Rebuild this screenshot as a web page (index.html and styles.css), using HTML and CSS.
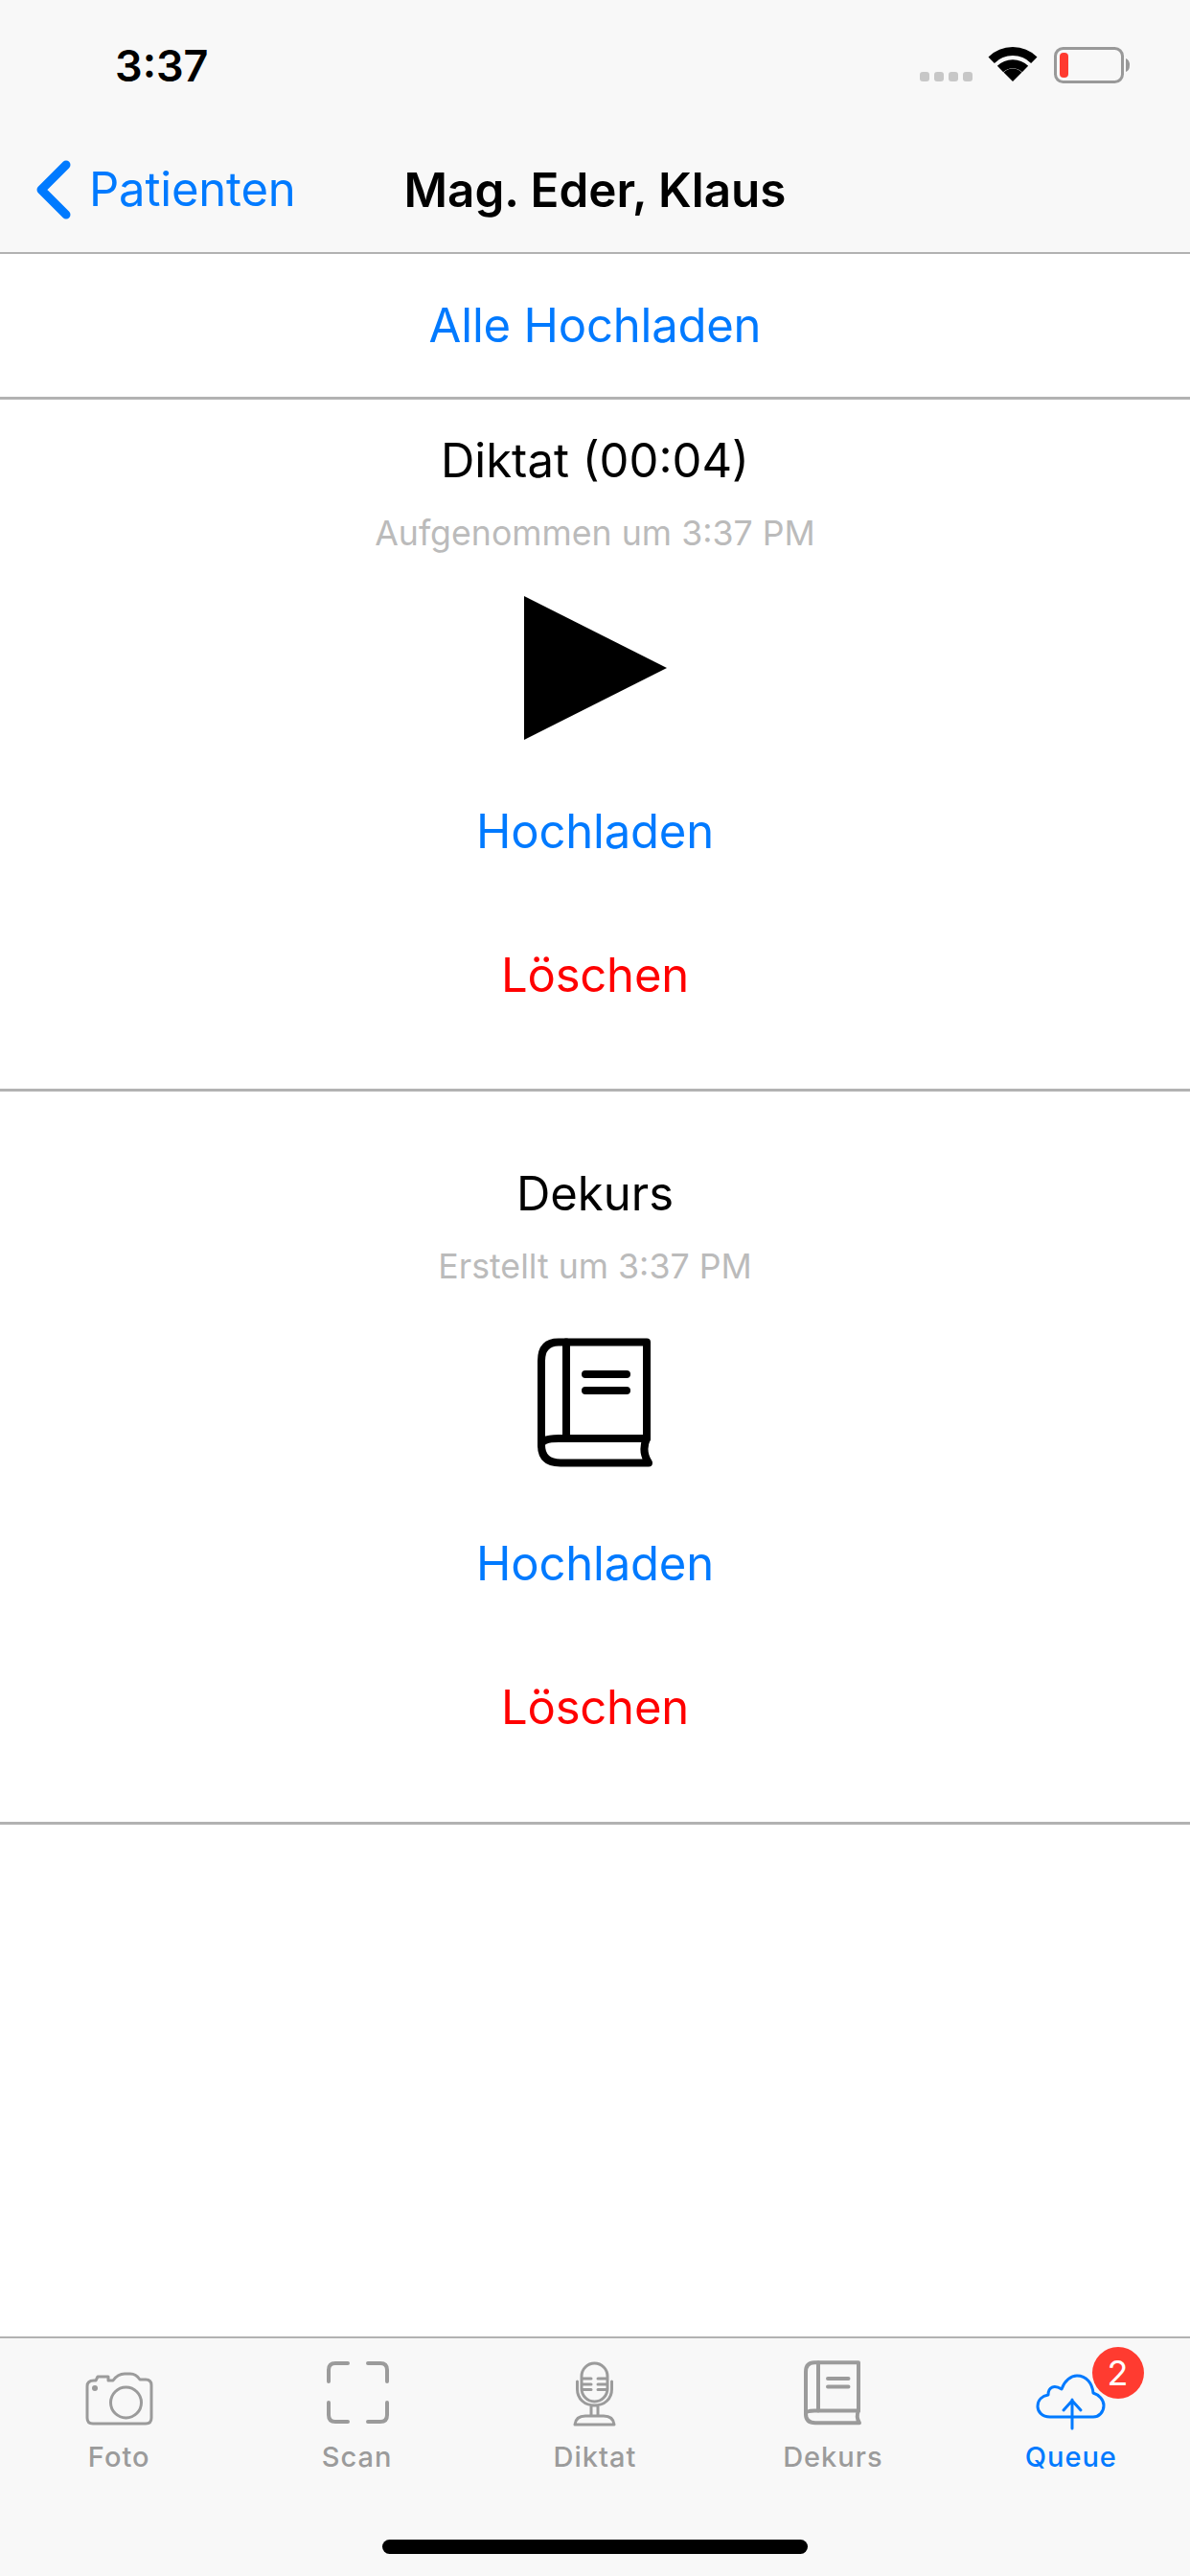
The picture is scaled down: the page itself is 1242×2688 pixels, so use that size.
FILE: index.html
```html
<!DOCTYPE html>
<html lang="de">
<head>
<meta charset="utf-8">
<title>Queue</title>
<link rel="stylesheet" href="styles.css">
</head>
<body>
<div class="app">
  <header class="top">
    <div class="status">
      <span class="time">3:37</span>
      <svg class="status-icons" width="230" height="55" viewBox="0 0 230 55">
        <g fill="#c7c7c7"><rect x="8" y="35" width="10" height="10" rx="3"/><rect x="23" y="35" width="10" height="10" rx="3"/><rect x="38" y="35" width="10" height="10" rx="3"/><rect x="53" y="35" width="10" height="10" rx="3"/></g>
        <g fill="none" stroke="#000" stroke-width="9"><path d="M82.7 22.7a31.5 31.5 0 0 1 44.6 0"/><path d="M92 32a18.5 18.5 0 0 1 26 0"/></g>
        <path d="M105 45l-9.5-9.5a13.5 13.5 0 0 1 19 0z"/>
        <rect x="149.500" y="10.500" width="70" height="35" rx="8" fill="none" stroke="#999" stroke-width="3"/>
        <rect x="154" y="15" width="9" height="26" rx="4" fill="#ff3b30"/>
        <path d="M223 21q4 1.500 4 7t-4 7z" fill="#999"/>
      </svg>
    </div>
    <nav class="navbar">
      <a class="back">
        <svg class="chevron" width="38" height="64" viewBox="0 0 38 64"><path d="M32 6L6 32l26 26" fill="none" stroke="#007aff" stroke-width="9" stroke-linecap="round" stroke-linejoin="round"/></svg>
        <span>Patienten</span>
      </a>
      <h1 class="title">Mag. Eder, Klaus</h1>
      <span></span>
    </nav>
  </header>

  <main class="content">
    <div class="upload-all"><a class="link">Alle Hochladen</a></div>

    <section class="item item-first">
      <div class="item-title">Diktat (00:04)</div>
      <div class="item-sub">Aufgenommen um 3:37 PM</div>
      <svg class="item-icon" width="149" height="150" viewBox="0 0 149 150"><path d="M0 0L149 75L0 150z"/></svg>
      <a class="action link">Hochladen</a>
      <a class="action danger">Löschen</a>
    </section>

    <section class="item item-second">
      <div class="item-title">Dekurs</div>
      <div class="item-sub">Erstellt um 3:37 PM</div>
      <svg class="item-icon book-large" width="120" height="135" viewBox="0 0 120 135">
        <g fill="none" stroke="#000" stroke-width="8" stroke-linecap="round" stroke-linejoin="round">
          <path d="M114 4.500H22Q4 4.500 4 24V112Q4 130.500 24 130.500H116Q108 118 114 105V4.500"/>
          <path d="M4 112Q4 105 22 105H114"/>
          <path d="M30 4.500V105M50 38H93M50 55H93"/>
        </g>
      </svg>
      <a class="action link">Hochladen</a>
      <a class="action danger">Löschen</a>
    </section>
  </main>

  <footer class="tabbar">
    <div class="tabs">
      <div class="tab">
        <svg class="tab-icon" width="80" height="76" viewBox="0 0 80 76"><path d="M14 23H16L18 19H29V23H34Q39 16 46 16H52Q58 16 62 22H68Q74 22 74 28V62Q74 68 68 68H13Q7 68 7 62V29Q7 23 14 23Z"/><circle cx="47.500" cy="46" r="16"/><circle class="solid" cx="15" cy="31" r="3"/></svg>
        <span>Foto</span>
      </div>
      <div class="tab">
        <svg class="tab-icon thick" width="80" height="76" viewBox="0 0 80 76"><path d="M10 24V12Q10 5 17 5H30M51 5H64Q71 5 71 12V24M71 46V59Q71 66 64 66H51M30 66H17Q10 66 10 59V46"/></svg>
        <span>Scan</span>
      </div>
      <div class="tab">
        <svg class="tab-icon" width="80" height="76" viewBox="0 0 80 76"><rect x="26" y="5" width="27" height="40" rx="13.500"/><path d="M21.500 24V32C21.500 42 29 49 39.500 49S57.500 42 57.500 32V24M36 49V60M43 49V60M19 69Q20 60 30 60H49Q59 60 60 69ZM27 21H36M27 27H36M27 32.500H36M43 21H52M43 27H52M43 32.500H52"/></svg>
        <span>Diktat</span>
      </div>
      <div class="tab">
        <svg class="tab-icon book-small" width="80" height="76" viewBox="-20 -4 160 152"><path d="M114 4.500H22Q4 4.500 4 24V112Q4 130.500 24 130.500H116Q108 118 114 105V4.500"/><path d="M4 112Q4 105 22 105H114"/><path d="M30 4.500V105M50 38H93M50 55H93"/></svg>
        <span>Dekurs</span>
      </div>
      <div class="tab tab-active">
        <svg class="tab-icon" width="80" height="76" viewBox="0 0 80 76"><path d="M18 61C9 61 5 55 5 50C5 43 10 39 16 38C16 30 22 27 30 32C33 23 40 18 46 18C56 18 62 26 63 36C69 38 74 43 74 49C74 56 69 61 63 61Z"/><path d="M41 73V43M32 54L41 44L50 54"/></svg>
        <span>Queue</span>
        <b class="badge">2</b>
      </div>
    </div>
    <div class="home-indicator"></div>
  </footer>
</div>
</body>
</html>
```

FILE: styles.css
```css
* { box-sizing: border-box; }
html, body { margin: 0; padding: 0; }
body { font-family: Inter, "Liberation Sans", sans-serif; background: #fff; color: #000; }
svg { display: block; }

.app { width: 1242px; height: 2688px; display: flex; flex-direction: column; overflow: hidden; }

.top { height: 265px; background: #f8f8f8; border-bottom: 2px solid #b2b2b2; flex: none; }
.status { height: 132px; display: flex; justify-content: space-between; align-items: flex-start; padding: 40px 60px 0 120px; }
.time { font-size: 45px; font-weight: 600; line-height: 54px; margin-top: 2px; }
.navbar { height: 131px; display: grid; grid-template-columns: 1fr auto 1fr; align-items: center; padding: 0 37px; }
.back { display: flex; align-items: center; gap: 18px; color: #007aff; font-size: 49px; letter-spacing: -0.2px; }
.title { margin: 0; font-size: 49.4px; font-weight: 600; }

.content { flex: 1; }
.link { color: #007aff; }
.danger { color: #f00; }
.upload-all { height: 152px; border-bottom: 3px solid #b2b2b2; display: flex; align-items: center; justify-content: center; font-size: 49px; letter-spacing: -0.2px; }

.item { display: flex; flex-direction: column; align-items: center; border-bottom: 3px solid #b2b2b2; }
.item-first { height: 722px; padding-top: 34px; }
.item-second { height: 765px; padding-top: 77px; }
.item-title { height: 60px; line-height: 60px; font-size: 49px; }
.item-sub { height: 44px; line-height: 44px; margin-top: 23px; font-size: 35.7px; color: #bbb; }
.item-icon { margin-top: 44px; flex: none; fill: #000; }
.book-large { margin-top: 53px; margin-bottom: 5px; }
.action { height: 100px; line-height: 100px; font-size: 49px; letter-spacing: -0.2px; flex: none; }
.item-icon + .action { margin-top: 46px; }
.action + .action { margin-top: 50px; }

.tabbar { height: 250px; flex: none; background: #f8f8f8; border-top: 2px solid #b2b2b2; display: flex; flex-direction: column; }
.tabs { display: grid; grid-template-columns: repeat(5, 1fr); padding-top: 21px; }
.tab { position: relative; display: flex; flex-direction: column; align-items: center; color: #9b9b9b; font-size: 29px; font-weight: 500; line-height: 40px; letter-spacing: 1px; gap: 7px; }
.tab-icon { fill: none; stroke: currentColor; stroke-width: 3; stroke-linejoin: round; stroke-linecap: round; }
.tab-icon .solid { fill: currentColor; stroke: none; }
.thick { stroke-width: 4; }
.book-small { stroke-width: 8; }
.tab-active { color: #007aff; }
.badge { position: absolute; left: 146px; top: -12px; width: 54px; height: 54px; border-radius: 50%; background: #ff3b30; color: #fff; font-size: 36px; font-weight: 400; line-height: 54px; text-align: center; letter-spacing: 0; }
.home-indicator { width: 444px; height: 15px; border-radius: 8px; background: #000; margin: 66px auto 0; }
```
